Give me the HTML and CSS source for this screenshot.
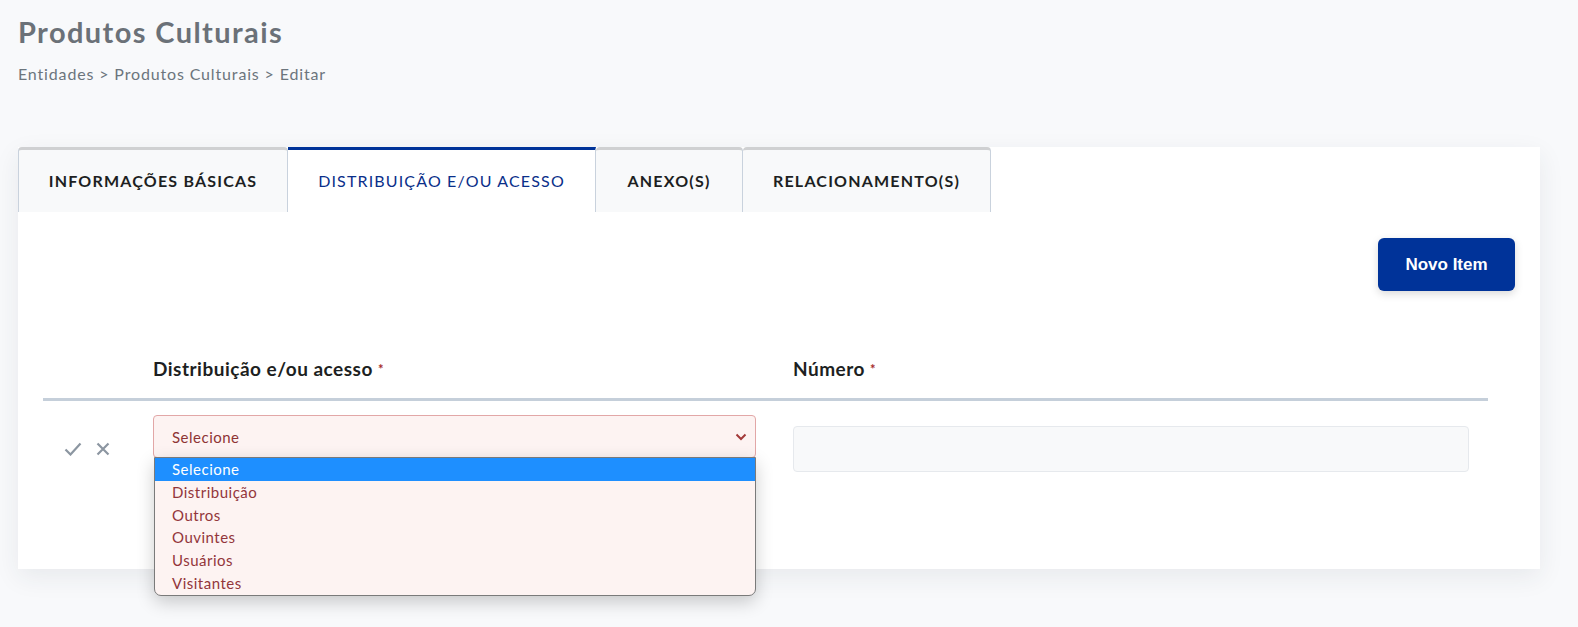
FILE: index.html
```html
<!DOCTYPE html>
<html lang="pt">
<head>
<meta charset="utf-8">
<title>Produtos Culturais</title>
<link rel="stylesheet" href="styles.css">
</head>
<body>
<div class="page">
  <header class="page-header">
    <h1 class="title">Produtos Culturais</h1>
    <div class="breadcrumb">Entidades &gt; Produtos Culturais &gt; Editar</div>
  </header>

  <section class="card">
    <nav class="tabs">
      <div class="tab">INFORMAÇÕES BÁSICAS</div>
      <div class="tab active">DISTRIBUIÇÃO E/OU ACESSO</div>
      <div class="tab">ANEXO(S)</div>
      <div class="tab">RELACIONAMENTO(S)</div>
    </nav>
    <div class="card-body">
      <div class="toolbar">
        <button class="btn-primary">Novo Item</button>
      </div>
      <div class="grid-table">
        <div class="thead">
          <div class="th th-actions"></div>
          <div class="th th-dist">Distribuição e/ou acesso <span class="req">*</span></div>
          <div class="th th-num">Número <span class="req">*</span></div>
        </div>
        <div class="trow">
          <div class="td td-actions">
            <svg class="ico" width="18" height="14" viewBox="0 0 18 14"><path d="M1.5 7.5 L6.5 12.5 L16.5 1.5" fill="none" stroke="#8c96a1" stroke-width="2.2"/></svg>
            <svg class="ico" width="14" height="14" viewBox="0 0 14 14"><path d="M1.5 1.5 L12.5 12.5 M12.5 1.5 L1.5 12.5" fill="none" stroke="#8c96a1" stroke-width="2.2"/></svg>
          </div>
          <div class="td td-dist">
            <div class="select-wrap">
              <div class="select">
                <span>Selecione</span>
                <svg class="chev" width="12" height="8" viewBox="0 0 12 8"><path d="M1.5 1.5 L6 6 L10.5 1.5" fill="none" stroke="#a33a3a" stroke-width="2"/></svg>
              </div>
              <ul class="options">
                <li class="opt selected">Selecione</li>
                <li class="opt">Distribuição</li>
                <li class="opt">Outros</li>
                <li class="opt">Ouvintes</li>
                <li class="opt">Usuários</li>
                <li class="opt">Visitantes</li>
              </ul>
            </div>
          </div>
          <div class="td td-num">
            <div class="input"></div>
          </div>
        </div>
      </div>
    </div>
  </section>
</div>
</body>
</html>
```

FILE: styles.css
```css
* { box-sizing: border-box; }
html, body { margin: 0; padding: 0; overflow: hidden; }
body {
  background: #f8f9fb;
  font-family: "Lato", "Noto Sans", sans-serif;
  color: #212529;
}
.page {
  width: 1578px;
  height: 627px;
  padding: 14px 38px 0 18px;
  overflow: hidden;
}
.page-header { height: 133px; }
.title {
  margin: 0;
  font-size: 29px;
  font-weight: 700;
  line-height: 36px;
  letter-spacing: 1.4px;
  color: #6b7178;
}
.breadcrumb {
  margin-top: 13px;
  font-size: 16px;
  line-height: 22px;
  letter-spacing: 0.85px;
  color: #6c757d;
}
.card {
  width: 1522px;
  background: #fff;
  box-shadow: 0 8px 24px rgba(40, 50, 70, 0.08);
}
.tabs {
  display: flex;
  height: 65px;
  background: #fff;
}
.tab {
  display: flex;
  align-items: center;
  justify-content: center;
  background: #f8f9fa;
  border-top: 3px solid #cfd0d2;
  border-left: 1px solid #c9d2dd;
  border-right: 1px solid #c9d2dd;
  border-radius: 4px 4px 0 0;
  font-size: 16px;
  font-weight: 700;
  letter-spacing: 1.2px;
  color: #1d1f22;
  padding: 0 0 2px;
}
.tab:nth-child(1) { width: 270px; }
.tab:nth-child(2) { width: 308px; }
.tab:nth-child(3) { width: 147px; }
.tab:nth-child(4) { width: 248px; }
.tab + .tab { border-left: none; }
.tab.active {
  background: #fff;
  border-top-color: #003399;
  border-radius: 0;
  color: #0a2f8a;
  font-weight: 400;
  letter-spacing: 1.15px;
}
.card-body {
  padding: 26px 25px 0 25px;
  height: 357px;
}
.toolbar {
  display: flex;
  justify-content: flex-end;
}
.btn-primary {
  width: 137px;
  height: 53px;
  background: #003399;
  color: #fff;
  border: none;
  border-radius: 6px;
  font-family: "Liberation Sans", Arial, sans-serif;
  font-weight: 700;
  font-size: 17px;
  box-shadow: 0 3px 8px rgba(0, 0, 0, 0.15);
}
.grid-table {
  width: 1445px;
  margin-top: 52px;
}
.thead, .trow {
  display: grid;
  grid-template-columns: 110px 640px 1fr;
}
.thead {
  border-bottom: 3px solid #c5cfda;
  height: 58px;
}
.th {
  font-size: 19px;
  font-weight: 700;
  line-height: 24px;
  letter-spacing: 0.5px;
  padding-top: 14px;
  color: #1d1f22;
}
.req {
  color: #a52a2a;
  font-size: 13px;
  vertical-align: 2px;
}
.td-actions {
  display: flex;
  align-items: center;
  gap: 14px;
  padding-left: 21px;
  padding-top: 39px;
  height: 56px;
}
.td-dist { padding-top: 14px; }
.select-wrap {
  position: relative;
  width: 603px;
}
.select {
  height: 43px;
  background: #fdf3f2;
  border: 1px solid #e2a7a7;
  border-radius: 4px;
  display: flex;
  align-items: center;
  justify-content: space-between;
  padding: 0 8px 0 18px;
  font-size: 15px;
  letter-spacing: 0.5px;
  color: #8e3434;
}
.options {
  position: absolute;
  top: 42px;
  left: 1px;
  width: 602px;
  margin: 0;
  padding: 0;
  list-style: none;
  background: #fdf3f2;
  border: 1px solid #7a7a7a;
  border-radius: 0 0 7px 7px;
  box-shadow: 0 6px 18px rgba(0, 0, 0, 0.2);
  overflow: hidden;
}
.opt {
  height: 22.8px;
  line-height: 22.8px;
  padding-left: 17px;
  font-size: 15px;
  letter-spacing: 0.5px;
  color: #93363b;
}
.opt.selected {
  background: #1e8fff;
  color: #fff;
}
.td-num { padding-top: 25px; }
.input {
  width: 676px;
  height: 46px;
  background: #f8f9fa;
  border: 1px solid #e6e9ed;
  border-radius: 4px;
}
```
